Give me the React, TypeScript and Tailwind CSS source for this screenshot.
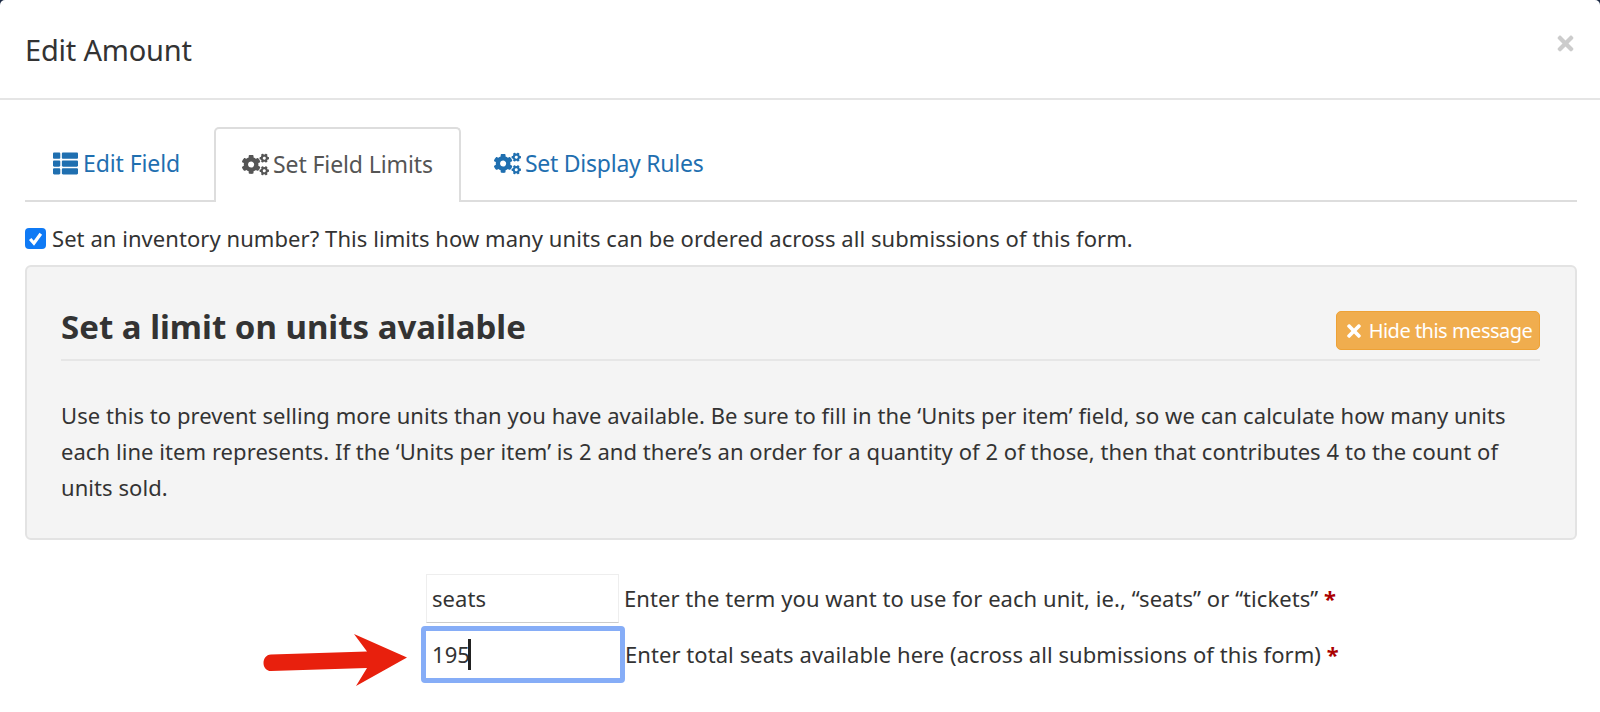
import { FaCogs, FaThList, FaTimes } from "react-icons/fa";

const font = "font-['Noto_Sans','Open_Sans',sans-serif]";

const App = () => {
  return (
    <div className={`${font} h-[712px] w-[1600px] overflow-hidden bg-[#1c2a44] text-[#333]`}>
      <div className="h-full w-full overflow-hidden rounded-t-[5px] bg-white">
        {/* modal header */}
        <div className="flex h-[100px] items-center justify-between border-b-2 border-[#e5e5e5] pl-[25px] pr-[23px]">
          <h4 className="pt-[2px] text-[29px] tracking-[-0.2px]">Edit Amount</h4>
          <FaTimes className="mb-[12px] text-[23px] text-[#cccccc]" />
        </div>

        <div className="pl-[25px] pr-[23px]">
          {/* tabs */}
          <div className="mt-[27px] flex h-[75px] border-b-2 border-[#dddddd]">
            <a className="flex w-[189px] items-center gap-[5px] pl-[28px] text-[23px] tracking-[-0.1px] text-[#1f6fb0]">
              <FaThList className="text-[25px]" />
              Edit Field
            </a>
            <a className="-mb-[2px] flex h-[75px] items-center gap-[4px] rounded-t-[5px] border-2 border-b-0 border-[#dddddd] bg-white px-[26px] pb-[2px] text-[23px] tracking-[-0.1px] text-[#555]">
              <FaCogs className="text-[27px]" />
              Set Field Limits
            </a>
            <a className="flex items-center gap-[4px] px-[33px] text-[23px] tracking-[-0.25px] text-[#1f6fb0]">
              <FaCogs className="text-[27px]" />
              Set Display Rules
            </a>
          </div>

          {/* checkbox row */}
          <label className="mt-[18px] flex h-[36px] items-center gap-[6px] text-[22px] tracking-[0.06px]">
            <span className="flex h-[21px] w-[21px] items-center justify-center rounded-[4px] bg-[#0f7af5]">
              <svg viewBox="0 0 16 16" className="h-[17px] w-[17px]" fill="none" stroke="white" strokeWidth="3">
                <path d="M3 8.5l3.5 4L13 3.5" />
              </svg>
            </span>
            Set an inventory number? This limits how many units can be ordered across all submissions of this form.
          </label>

          {/* help panel */}
          <div className="mt-[9px] h-[275px] rounded-[6px] border-2 border-[#e3e3e3] bg-[#f4f4f4] pl-[34px] pr-[35px] pt-[44px]">
            <div className="flex h-[50px] items-start justify-between border-b-2 border-[#e6e6e6]">
              <h2 className="-mt-[4px] text-[33px] font-bold leading-[40px]">Set a limit on units available</h2>
              <button className="flex h-[39px] w-[204px] items-center justify-center gap-[5px] rounded-[5px] border border-[#eea236] bg-[#f0ad4e] text-[20px] tracking-[-0.5px] text-white">
                <FaTimes className="text-[20px]" />
                Hide this message
              </button>
            </div>
            <p className="mt-[36px] text-[22px] leading-[36px] tracking-[0.06px]">
              Use this to prevent selling more units than you have available. Be sure to fill in the ‘Units per item’ field, so we can calculate how many units
              <br />
              each line item represents. If the ‘Units per item’ is 2 and there’s an order for a quantity of 2 of those, then that contributes 4 to the count of
              <br />
              units sold.
            </p>
          </div>

          {/* inputs */}
          <div className="relative mt-[34px] flex flex-col pl-[401px]">
            <div className="flex h-[49px] items-center gap-[5px] text-[22px] tracking-[0.06px]">
              <div className="flex h-[49px] w-[193px] items-center border border-[#eeeeee] border-b-[#cccccc] px-[5px]">
                seats
              </div>
              <span>
                Enter the term you want to use for each unit, ie., “seats” or “tickets” <b className="text-[#a00]">*</b>
              </span>
            </div>
            <div className="-ml-[5px] mt-[3px] flex h-[57px] items-center text-[22px] tracking-[0.06px]">
              <div className="flex h-[57px] w-[204px] items-center rounded-[4px] border-[5px] border-[#86adf7] px-[6px]">
                195
                <span className="-ml-[2px] h-[31px] w-[3px] bg-[#222]" />
              </div>
              <span>
                Enter total seats available here (across all submissions of this form) <b className="text-[#a00]">*</b>
              </span>
            </div>
            {/* annotation arrow */}
            <svg className="absolute left-[238px] top-[60px]" width="150" height="54" viewBox="0 0 150 54">
              <path
                d="M8 20.5L104 17.5L91 0L144 23.5L93 52L104 34L8 37C-2 37-2 21 8 20.5Z"
                fill="#e8200d"
              />
            </svg>
          </div>
        </div>
      </div>
    </div>
  );
};

export default App;
